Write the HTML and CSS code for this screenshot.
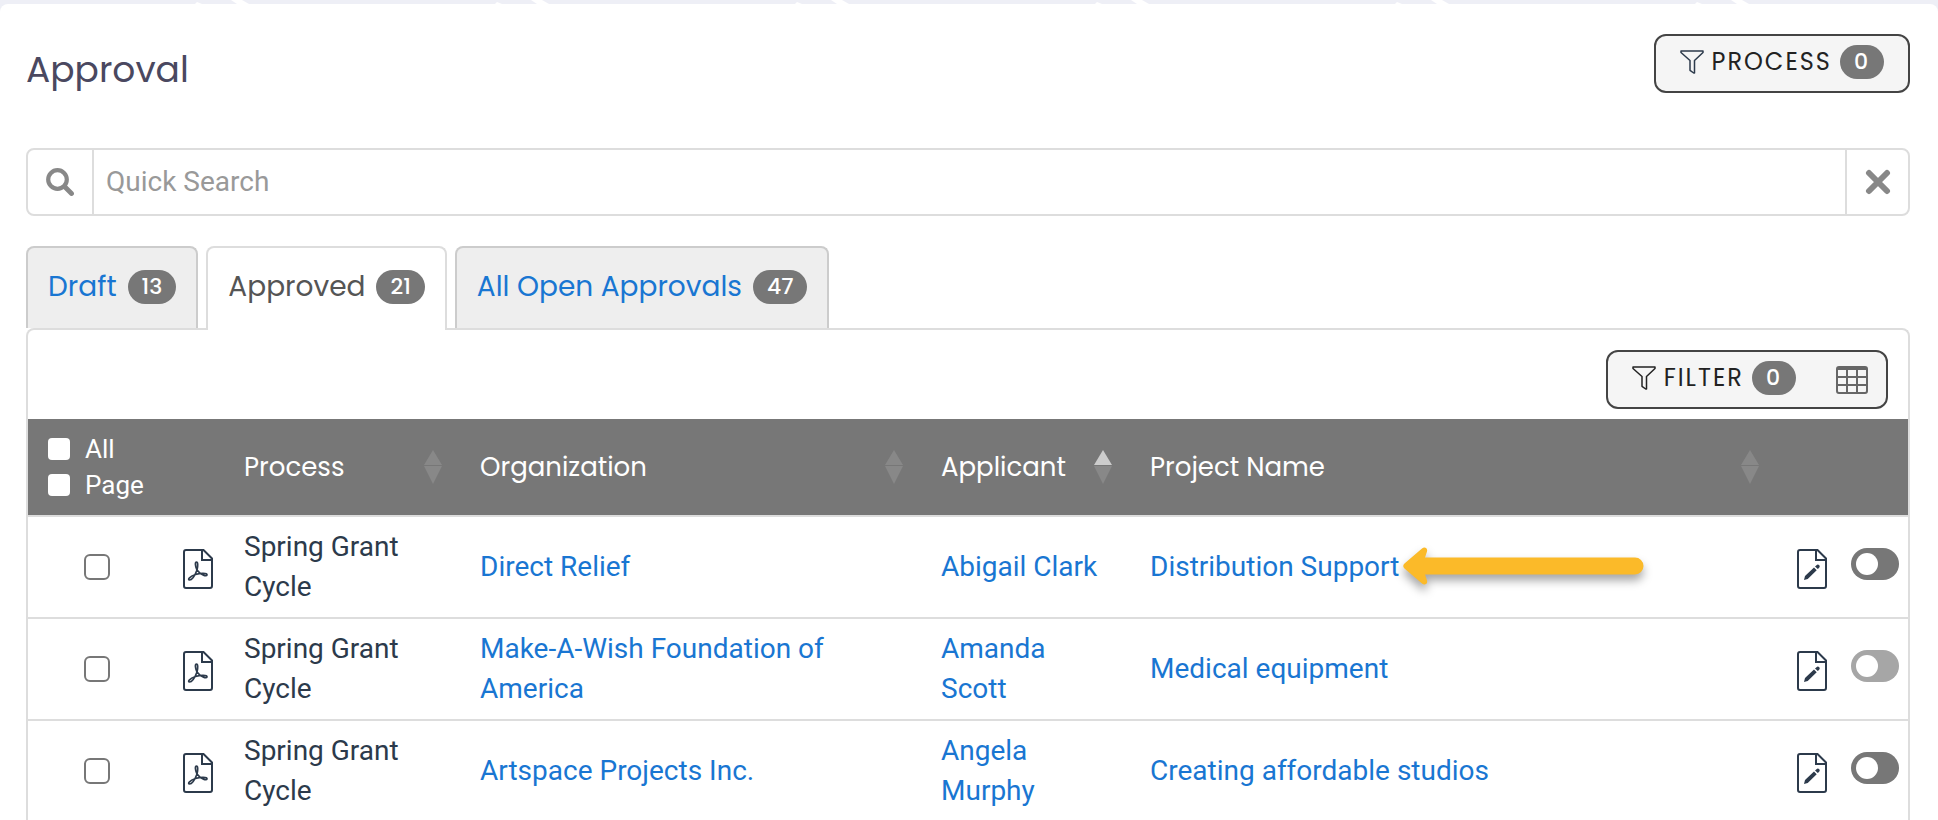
FILE: index.html
```html
<!DOCTYPE html>
<html lang="en">
  <head>
    <meta charset="UTF-8" />
    <meta name="viewport" content="width=device-width, initial-scale=1.0" />
    <title>Approval</title>
    <link rel="stylesheet" href="styles.css">
  </head>
  <body>
    <!-- Shared icons -->
    <svg class="icon-defs" aria-hidden="true">
      <symbol id="icon-funnel" viewBox="0 0 24 24">
        <path d="M1 1h22v1.5l-8.5 8V23h-.8L10 20.300v-9.800L1 2.500z" fill="none" stroke="currentColor" stroke-width="1.500" stroke-linejoin="round" />
      </symbol>
      <symbol id="icon-pdf" viewBox="0 0 30 40">
        <path d="M3 1h17.500L29 9.500V37a2 2 0 0 1-2 2H3a2 2 0 0 1-2-2V3a2 2 0 0 1 2-2z" fill="none" stroke="currentColor" stroke-width="2" />
        <path d="M19 1v10h10" fill="none" stroke="currentColor" stroke-width="2" />
        <path d="M14 21c-2-4-2-8-.5-8s1.500 4 .5 8c-1.500 4-4.500 10-7.500 10-2 0-.5-3.500 6-5.500 5-1.500 11.500-1.500 11.500.2 0 2.300-6 .8-10-4.700z" fill="none" stroke="currentColor" stroke-width="1.700" />
      </symbol>
      <symbol id="icon-edit" viewBox="0 0 30 40">
        <path d="M3 1h17.500L29 9.500V37a2 2 0 0 1-2 2H3a2 2 0 0 1-2-2V3a2 2 0 0 1 2-2z" fill="none" stroke="currentColor" stroke-width="2" />
        <path d="M19 1v10h10" fill="none" stroke="currentColor" stroke-width="2" />
        <path d="M7 31l1-4 9-8.500 2.700 2.700-9 8.800zM18 17.500l1.500-1.300a1.500 1.500 0 0 1 2.700 2.500L20.800 20z" fill="currentColor" />
      </symbol>
      <symbol id="icon-sort-up" viewBox="0 0 18 15"><path d="M9 0l9 15H0z" fill="currentColor" /></symbol>
      <symbol id="icon-sort-down" viewBox="0 0 18 18"><path d="M0 0h18L9 18z" fill="currentColor" /></symbol>
    </svg>

    <svg class="strip" aria-hidden="true">
      <pattern id="chevrons" width="300" height="4" patternUnits="userSpaceOnUse">
        <path d="M231 0h11l7 4h-12zM195 4l2-2 5 2z" fill="#fff" />
      </pattern>
      <rect width="100%" height="4" fill="url(#chevrons)" />
    </svg>

    <main class="page">
      <header class="page-header">
        <h1>Approval</h1>
        <button type="button" class="btn">
          <svg class="funnel funnel-blue"><use href="#icon-funnel" /></svg>
          <span class="btn-text">PROCESS</span>
          <span class="badge">0</span>
        </button>
      </header>

      <form class="search" role="search">
        <button type="submit" class="search-btn" aria-label="Search">
          <svg width="28" height="28" viewBox="0 0 28 28"><circle cx="11.500" cy="11.500" r="9.300" fill="none" stroke="currentColor" stroke-width="4.200" /><path d="M19 19l6.500 6.500" stroke="currentColor" stroke-width="4.800" stroke-linecap="round" /></svg>
        </button>
        <input type="text" class="search-input" placeholder="Quick Search" aria-label="Quick Search" />
        <button type="reset" class="search-btn search-clear" aria-label="Clear search">
          <svg width="26" height="26" viewBox="0 0 26 26"><path d="M4 4l18 18M22 4L4 22" stroke="currentColor" stroke-width="6" stroke-linecap="round" /></svg>
        </button>
      </form>

      <nav class="tabs">
        <a href="#draft" class="tab">Draft <span class="badge">13</span></a>
        <a href="#approved" class="tab tab-active">Approved <span class="badge">21</span></a>
        <a href="#open" class="tab">All Open Approvals <span class="badge">47</span></a>
      </nav>

      <section class="panel">
        <div class="toolbar">
          <div class="btn-group">
            <button type="button" class="btn">
              <svg class="funnel"><use href="#icon-funnel" /></svg>
              <span class="btn-text">FILTER</span>
              <span class="badge">0</span>
            </button>
            <button type="button" class="btn btn-grid" aria-label="Columns">
              <svg width="32" height="28" viewBox="0 0 32 28"><path d="M3 1h26a2 2 0 0 1 2 2v22a2 2 0 0 1-2 2H3a2 2 0 0 1-2-2V3a2 2 0 0 1 2-2zM1 11h30M1 19h30M11 3v24M21 3v24" fill="none" stroke="currentColor" stroke-width="2" /><path d="M1 2h30v2H1z" fill="currentColor" /></svg>
            </button>
          </div>
        </div>

        <table class="grid">
          <colgroup>
            <col class="col-check" />
            <col class="col-pdf" />
            <col class="col-process" />
            <col class="col-org" />
            <col class="col-applicant" />
            <col />
            <col class="col-edit" />
            <col class="col-toggle" />
          </colgroup>
          <thead>
            <tr>
              <th colspan="2">
                <label class="select-label"><input type="checkbox" class="select-box" />All</label>
                <label class="select-label"><input type="checkbox" class="select-box" />Page</label>
              </th>
              <th><div class="sortable">Process <span class="sort"><svg width="18" height="15"><use href="#icon-sort-up" /></svg><svg width="18" height="18"><use href="#icon-sort-down" /></svg></span></div></th>
              <th><div class="sortable">Organization <span class="sort"><svg width="18" height="15"><use href="#icon-sort-up" /></svg><svg width="18" height="18"><use href="#icon-sort-down" /></svg></span></div></th>
              <th><div class="sortable">Applicant <span class="sort sort-asc"><svg width="18" height="15"><use href="#icon-sort-up" /></svg><svg width="18" height="18"><use href="#icon-sort-down" /></svg></span></div></th>
              <th><div class="sortable">Project Name <span class="sort"><svg width="18" height="15"><use href="#icon-sort-up" /></svg><svg width="18" height="18"><use href="#icon-sort-down" /></svg></span></div></th>
              <th></th>
              <th></th>
            </tr>
          </thead>
          <tbody>
            <tr>
              <td class="icon-cell"><input type="checkbox" class="row-box" aria-label="Select Direct Relief" /></td>
              <td class="icon-cell"><a href="#pdf" class="doc" aria-label="PDF"><svg width="30" height="40"><use href="#icon-pdf" /></svg></a></td>
              <td>Spring Grant Cycle</td>
              <td><a href="#org">Direct Relief</a></td>
              <td><a href="#applicant">Abigail Clark</a></td>
              <td>
                <span class="pointed">
                  <a href="#project">Distribution Support</a>
                  <svg class="arrow" width="240" height="38" viewBox="0 0 240 38"><path d="M1.500 16.500L19 1.500c2.500-2.200 6-.5 5 3L22 10.500h210a8 8 0 0 1 0 17H22l2 6c1 3.500-2.500 5.200-5 3L1.500 21.500a3.500 3.500 0 0 1 0-5z" fill="#fbba29" /></svg>
                </span>
              </td>
              <td class="icon-cell"><a href="#edit" class="doc" aria-label="Edit"><svg width="30" height="40"><use href="#icon-edit" /></svg></a></td>
              <td class="icon-cell"><input type="checkbox" class="toggle" aria-label="Toggle Direct Relief" /></td>
            </tr>
            <tr>
              <td class="icon-cell"><input type="checkbox" class="row-box" aria-label="Select Make-A-Wish" /></td>
              <td class="icon-cell"><a href="#pdf" class="doc" aria-label="PDF"><svg width="30" height="40"><use href="#icon-pdf" /></svg></a></td>
              <td>Spring Grant Cycle</td>
              <td><a href="#org">Make-A-Wish Foundation of America</a></td>
              <td><a href="#applicant">Amanda Scott</a></td>
              <td><a href="#project">Medical equipment</a></td>
              <td class="icon-cell"><a href="#edit" class="doc" aria-label="Edit"><svg width="30" height="40"><use href="#icon-edit" /></svg></a></td>
              <td class="icon-cell"><input type="checkbox" class="toggle" aria-label="Toggle Make-A-Wish" disabled /></td>
            </tr>
            <tr>
              <td class="icon-cell"><input type="checkbox" class="row-box" aria-label="Select Artspace" /></td>
              <td class="icon-cell"><a href="#pdf" class="doc" aria-label="PDF"><svg width="30" height="40"><use href="#icon-pdf" /></svg></a></td>
              <td>Spring Grant Cycle</td>
              <td><a href="#org">Artspace Projects Inc.</a></td>
              <td><a href="#applicant">Angela Murphy</a></td>
              <td><a href="#project">Creating affordable studios</a></td>
              <td class="icon-cell"><a href="#edit" class="doc" aria-label="Edit"><svg width="30" height="40"><use href="#icon-edit" /></svg></a></td>
              <td class="icon-cell"><input type="checkbox" class="toggle" aria-label="Toggle Artspace" /></td>
            </tr>
          </tbody>
        </table>
      </section>
    </main>
  </body>
</html>
```

FILE: styles.css
```css
* {
  box-sizing: border-box;
}
body {
  margin: 0;
  background-color: #eeeff6;
  font-family: Roboto, sans-serif;
  font-size: 28px;
  line-height: 40px;
  color: #2c3a4b;
}
a {
  color: #1976d2;
  text-decoration: none;
}
button {
  font: inherit;
  cursor: pointer;
}
svg {
  display: block;
}
.icon-defs {
  position: absolute;
  width: 0;
  height: 0;
}
.strip {
  width: 100%;
  height: 4px;
}
.page {
  min-height: calc(100vh - 4px);
  padding: 30px 28px 0 26px;
  background-color: #fff;
  border-radius: 8px 8px 0 0;
}
.page-header {
  display: flex;
  justify-content: space-between;
  align-items: flex-start;
  margin-bottom: 55px;
}
h1 {
  margin: 16px 0 0;
  font-family: Poppins, Inter, sans-serif;
  font-size: 36px;
  font-weight: 400;
  color: #4a4860;
}
.btn,
.btn-group {
  display: flex;
  align-items: center;
  height: 59px;
  border: 2px solid #444;
  border-radius: 12px;
  background-color: #f5f5f5;
}
.btn {
  gap: 8px;
  padding: 0 24px 3px;
  color: #222;
  letter-spacing: 2px;
}
.btn-group .btn {
  height: auto;
  border: none;
  background: none;
}
.btn-group .btn-grid {
  padding: 0 18px 0 16px;
  color: #666;
}
.btn-text {
  font-family: Poppins, Inter, sans-serif;
  font-size: 24px;
}
.funnel {
  width: 24px;
  height: 24px;
}
.funnel-blue {
  color: #2c3a4b;
}
.badge {
  padding: 0 14px;
  border-radius: 17px;
  background-color: #777;
  color: #fff;
  font-family: Poppins, Inter, sans-serif;
  font-size: 22px;
  font-weight: 500;
  line-height: 34px;
}

/* Quick search */
.search {
  display: flex;
  height: 68px;
  margin-bottom: 30px;
  border: 2px solid #ddd;
  border-radius: 8px;
}
.search-btn {
  display: flex;
  align-items: center;
  justify-content: center;
  width: 66px;
  padding: 0;
  border: none;
  border-right: 2px solid #ddd;
  background: none;
  color: #888;
}
.search-clear {
  width: 63px;
  border-right: none;
  border-left: 2px solid #ddd;
}
.search-input {
  flex: 1;
  min-width: 0;
  padding: 0 12px;
  border: none;
  outline: none;
  background: none;
  font: inherit;
}
.search-input::placeholder {
  color: #999;
}

/* Tabs */
.tabs {
  display: flex;
  gap: 8px;
}
.tab {
  display: flex;
  align-items: center;
  gap: 11px;
  height: 82px;
  padding: 0 20px 2px;
  border: 2px solid #ccc;
  border-bottom: none;
  border-radius: 8px 8px 0 0;
  background-color: #eee;
  font-family: Poppins, Inter, sans-serif;
}
.tab-active {
  position: relative;
  height: 84px;
  margin-bottom: -2px;
  padding-bottom: 4px;
  border-color: #ddd;
  background-color: #fff;
  color: #555;
}
.panel {
  border: 2px solid #ddd;
  border-bottom: none;
  border-radius: 8px 8px 0 0;
}
.toolbar {
  display: flex;
  justify-content: flex-end;
  padding: 20px 20px 10px;
}

/* Table */
.grid {
  width: 100%;
  table-layout: fixed;
  border-collapse: separate;
  border-spacing: 0;
}
.col-check {
  width: 138px;
}
.col-pdf {
  width: 63px;
}
.col-process {
  width: 236px;
}
.col-org {
  width: 461px;
}
.col-applicant {
  width: 209px;
}
.col-edit {
  width: 60px;
}
.col-toggle {
  width: 66px;
}
th {
  height: 98px;
  padding: 0 15px;
  border-bottom: 2px solid #ddd;
  background-color: #777;
  color: #fff;
  font-family: Poppins, Inter, sans-serif;
  font-size: 26px;
  font-weight: 400;
  text-align: left;
}
td {
  padding: 10px 24px 10px 15px;
  border-bottom: 2px solid #ddd;
}
.sortable {
  display: flex;
  align-items: center;
  justify-content: space-between;
  white-space: nowrap;
}
.sort {
  display: flex;
  flex-direction: column;
  gap: 1px;
  margin-right: 8px;
  color: #888;
}
.sort-asc svg:first-child {
  color: #ccc;
}
.select-label {
  display: flex;
  align-items: center;
  gap: 15px;
  padding-left: 5px;
  font-family: Roboto, sans-serif;
  line-height: 36px;
}
.select-box,
.row-box,
.toggle {
  appearance: none;
  margin: 0;
  background-color: #fff;
}
.select-box {
  width: 22px;
  height: 22px;
  border-radius: 4px;
}
.icon-cell {
  padding: 0;
}
.icon-cell > * {
  display: block;
  margin: 0 auto;
}
.row-box {
  width: 26px;
  height: 26px;
  border: 2px solid #777;
  border-radius: 6px;
}
.doc {
  width: 30px;
  padding-top: 4px;
  color: #2c3a4b;
}
.toggle {
  width: 48px;
  height: 32px;
  padding: 5px;
  border-radius: 16px;
  background-color: #777;
}
.icon-cell .toggle {
  margin-bottom: 6px;
}
.toggle::before {
  content: "";
  display: block;
  width: 22px;
  height: 22px;
  border-radius: 50%;
  background-color: #fff;
}
.toggle:disabled {
  background-color: #a6a6a6;
}

/* Callout arrow next to the project link */
.pointed {
  position: relative;
}
.arrow {
  position: absolute;
  top: -3px;
  left: 100%;
  margin-left: 4px;
  overflow: visible;
  filter: drop-shadow(0 6px 5px rgba(0, 0, 0, 0.35));
}
```
